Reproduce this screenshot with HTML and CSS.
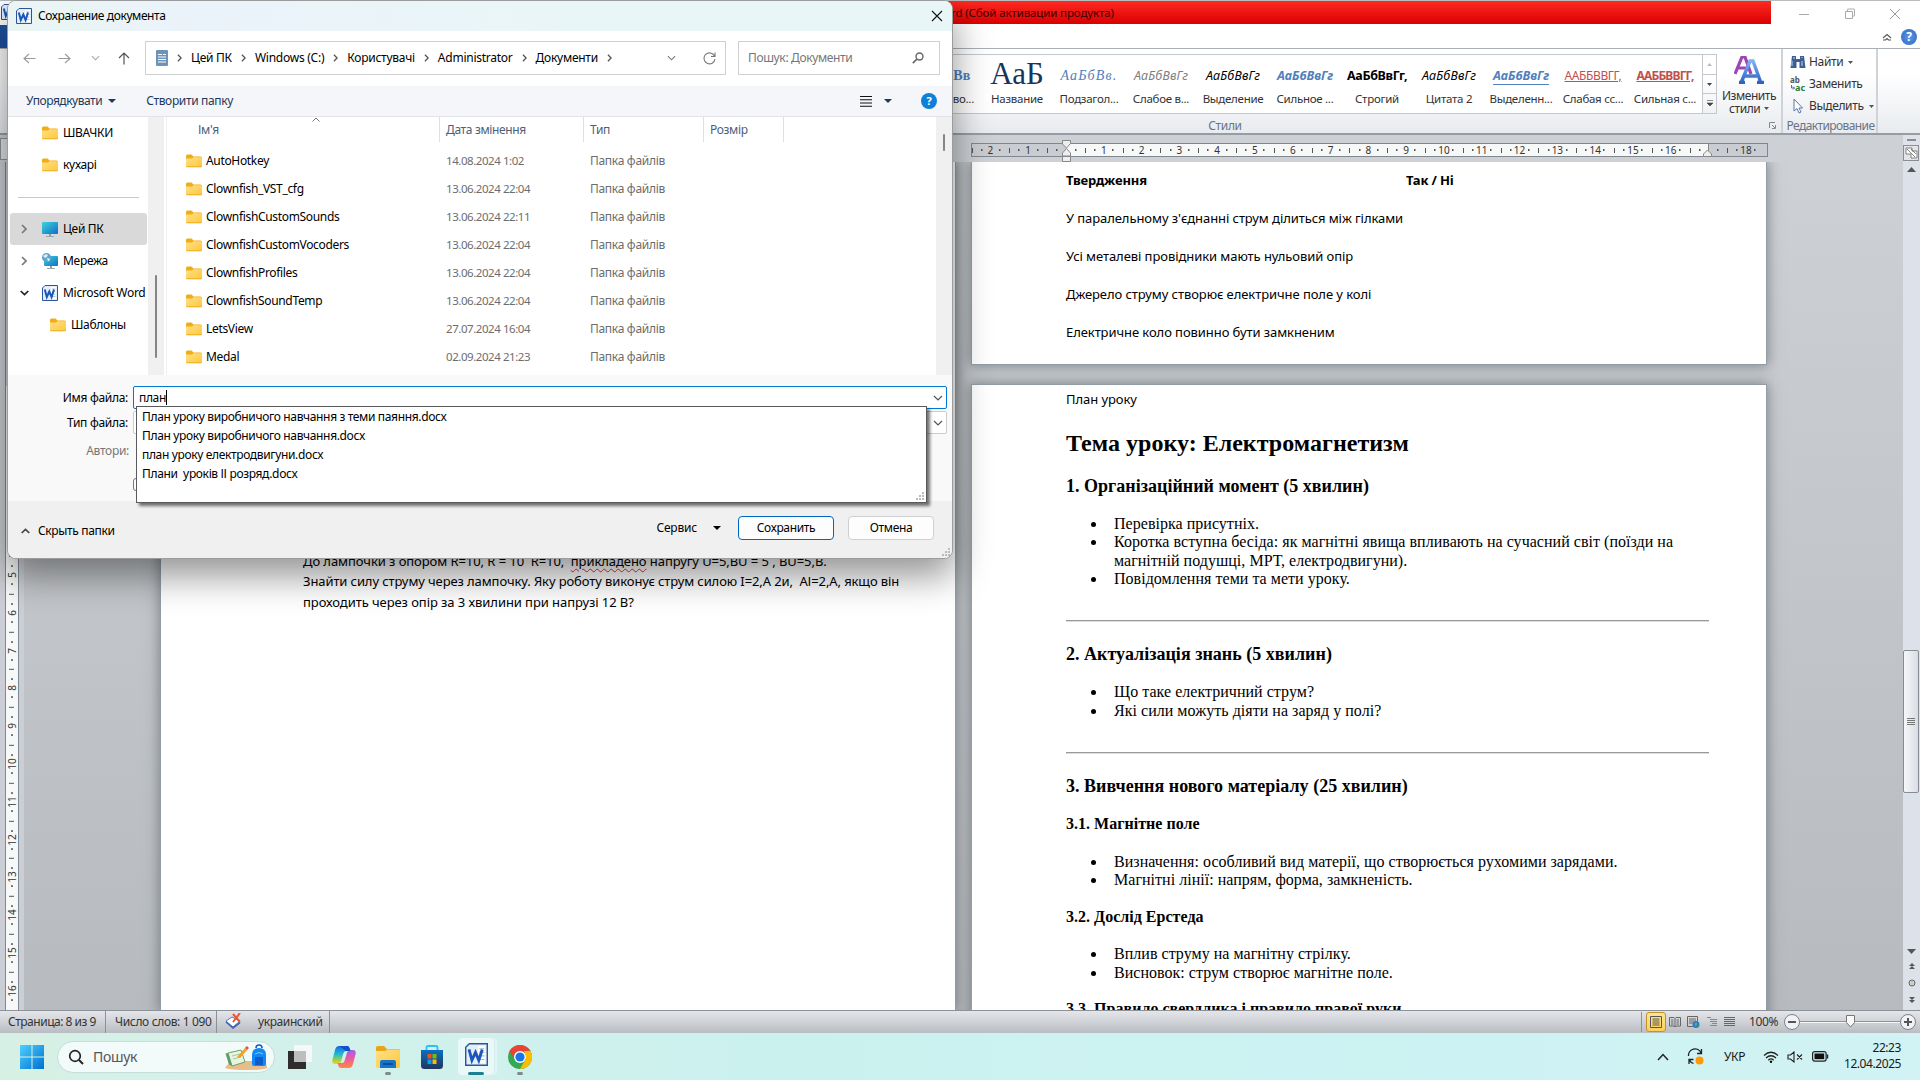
FILE: index.html
```html
<!DOCTYPE html>
<html lang="uk">
<head>
<meta charset="utf-8">
<title>Сохранение документа</title>
<link rel="stylesheet" href="styles.css">
</head>
<body>
<svg class="defs" width="0" height="0">
  <defs>
    <linearGradient id="gFolder" x1="0" y1="0" x2="1" y2="1"><stop offset="0" stop-color="#ffe08a"/><stop offset="1" stop-color="#fdc738"/></linearGradient>
    <linearGradient id="gScreen" x1="0" y1="0" x2="1" y2="1"><stop offset="0" stop-color="#3ed3dc"/><stop offset="1" stop-color="#0f6fc4"/></linearGradient>
    <linearGradient id="gWin" x1="0" y1="0" x2="1" y2="1"><stop offset="0" stop-color="#4fd0ff"/><stop offset="1" stop-color="#0070d0"/></linearGradient>
    <linearGradient id="gCo1" x1="0" y1="0" x2="0" y2="1"><stop offset="0" stop-color="#1b66e0"/><stop offset=".45" stop-color="#22b8d8"/><stop offset=".75" stop-color="#8fd14a"/><stop offset="1" stop-color="#f7d02c"/></linearGradient>
    <linearGradient id="gCo2" x1="0" y1="0" x2="0" y2="1"><stop offset="0" stop-color="#a35cf0"/><stop offset=".5" stop-color="#ef5a9a"/><stop offset="1" stop-color="#ff8a3c"/></linearGradient>
    <linearGradient id="gStore" x1="0" y1="0" x2="0" y2="1"><stop offset="0" stop-color="#0b6fc0"/><stop offset="1" stop-color="#22355f"/></linearGradient>
    <linearGradient id="gA" x1="0" y1="0" x2="0" y2="1"><stop offset="0" stop-color="#7fb2f0"/><stop offset="1" stop-color="#2a62c0"/></linearGradient>
  </defs>
  <symbol id="folder" viewBox="0 0 16 14"><path d="M0 2a1.5 1.5 0 0 1 1.500-1.500H5.500L7.500 2.500H14.500A1.500 1.500 0 0 1 16 4V6H0Z" fill="#f3ab16"/><path d="M0 4.500H6L7.500 3.200H14.800A1.200 1.200 0 0 1 16 4.400V12a1.300 1.300 0 0 1-1.300 1.300H1.300A1.300 1.300 0 0 1 0 12Z" fill="url(#gFolder)"/><path d="M.3 12.700H15.700" stroke="#eda91c" stroke-width=".8"/></symbol>
  <symbol id="word" viewBox="0 0 16 16"><path d="M3 .5H15.500V15.500H.5V3Z" fill="#e4eefb" stroke="#2b579a"/><path d="M9 2H14V14H9Z" fill="#fff"/><path d="M10 4h3.500M10 6.500h3.500M10 9h3.500M10 11.500h3.500" stroke="#9ab8e0" stroke-width=".8"/><path d="M2.800 4.500L4.800 12L7.300 6.500L9.600 12L12 4.500" fill="none" stroke="#1c57b8" stroke-width="2"/></symbol>
  <symbol id="pc" viewBox="0 0 16 15"><rect x="0" y="0" width="16" height="12" rx="1" fill="url(#gScreen)"/><path d="M7 12h2v2h-2z" fill="#8e9aa6"/><path d="M4 14h8v1h-8z" fill="#9aa6b2"/></symbol>
  <symbol id="net" viewBox="0 0 16 16"><rect x="2" y="3" width="14" height="10" rx="1" fill="url(#gScreen)"/><path d="M8 13h2v2h-2z" fill="#8e9aa6"/><path d="M5 15h8v1h-8z" fill="#9aa6b2"/><circle cx="4.500" cy="4.500" r="4.500" fill="#5aa6cf"/><path d="M1 3q3-3 5-1q-1 3-3 3zM5 5q3 0 3 2l-2 1.500z" fill="#d6f0f7"/></symbol>
  <symbol id="chevR" viewBox="0 0 6 10"><path d="M1 1L5 5L1 9" fill="none" stroke="currentColor" stroke-width="1.600"/></symbol>
  <symbol id="chevD" viewBox="0 0 10 6"><path d="M1 1L5 5L9 1" fill="none" stroke="currentColor" stroke-width="1.200"/></symbol>
  <symbol id="tri" viewBox="0 0 8 4"><path d="M0 0H8L4 4Z" fill="currentColor"/></symbol>
</svg>

<div class="screen">
  <section class="word">
    <header class="caption">
      <svg class="caption-icon" width="16" height="16"><use href="#word"/></svg>
      <div class="caption-red"><span>rd (Сбой активации продукта)</span></div>
      <div class="caption-btns">
        <svg width="12" height="12"><path d="M1 6.500h10" stroke="#aaa"/></svg>
        <svg width="12" height="12"><path d="M1.500 3.500h7v7h-7zM3.500 3.500v-2q0-.5.500-.5h6q.5 0 .5.500v6q0 .5-.5.500h-1.500" fill="none" stroke="#aaa"/></svg>
        <svg width="12" height="12"><path d="M1 1L11 11M11 1L1 11" stroke="#999"/></svg>
      </div>
    </header>
    <div class="tabs">
      <div class="file-tab"></div>
      <div class="tabs-end">
        <svg width="10" height="8"><path d="M1 5L5 1.500L9 5M1 7h2.500L5 5.500L6.500 7H9" fill="none" stroke="#555" stroke-width="1.100"/></svg>
        <span class="help-big">?</span>
      </div>
    </div>
    <div class="ribbon">
      <div class="styles-group">
        <div class="styles-main">
          <div class="gallery">
            <div class="style"><b class="pv heading">АаБбВв</b><span>Заголово...</span></div>
            <div class="style"><b class="pv title">АаБ</b><span>Название</span></div>
            <div class="style"><b class="pv subtitle">АаБбВв.</b><span>Подзагол...</span></div>
            <div class="style"><b class="pv it grey">АаБбВвГг</b><span>Слабое в...</span></div>
            <div class="style"><b class="pv it">АаБбВвГг</b><span>Выделение</span></div>
            <div class="style"><b class="pv it bold blue">АаБбВвГг</b><span>Сильное ...</span></div>
            <div class="style"><b class="pv bold">АаБбВвГг,</b><span>Строгий</span></div>
            <div class="style"><b class="pv it">АаБбВвГг</b><span>Цитата 2</span></div>
            <div class="style"><b class="pv it bold blue under">АаБбВвГг</b><span>Выделенн...</span></div>
            <div class="style"><b class="pv red caps">ААББВВГГ,</b><span>Слабая сс...</span></div>
            <div class="style"><b class="pv red caps bold">ААББВВГГ,</b><span>Сильная с...</span></div>
          </div>
          <div class="gallery-nav">
            <i class="off"><svg width="5" height="3"><path d="M0 3L2.500 0L5 3z" fill="#bbb"/></svg></i>
            <i><svg width="5" height="3"><path d="M0 0h5L2.500 3z" fill="#444"/></svg></i>
            <i><svg width="6" height="7"><path d="M0 .5h6M0 3h6L3 6z" fill="#444" stroke="#444" stroke-width=".6"/></svg></i>
          </div>
          <div class="change">
            <svg width="30" height="28"><path d="M1 18L8 1H11L17 18M4 12H14" fill="none" stroke="#a044b4" stroke-width="3.200"/><path d="M7 27L16 5H19L27 27M11 20H23M5 26.500h6M23 26.500h7" fill="none" stroke="url(#gA)" stroke-width="3.400"/></svg>
            <span>Изменить</span><span>стили <svg width="5" height="3"><path d="M0 0h5L2.500 3z" fill="#555"/></svg></span>
          </div>
        </div>
        <div class="group-name styles-name">Стили</div>
        <svg class="launcher" width="7" height="7"><path d="M.5 6V.5H6M3 3L6 6M6.500 3V6.500H3" fill="none" stroke="#888"/></svg>
      </div>
      <div class="edit-group">
        <div class="edit-rows">
          <div><svg width="16" height="14"><path d="M2 1h4v3h4V1h4l1.500 12H9.500V7h-3v6H.5z" fill="#3d5f94"/><path d="M2 6v5M12 6v5M4 2v2M12 2v1" stroke="#c5d7ee"/></svg><span>Найти</span><svg class="dd" width="5" height="3"><path d="M0 0h5L2.500 3z" fill="#555"/></svg></div>
          <div><svg width="16" height="16"><text x="0" y="7" class="ab">ab</text><text x="5" y="15" class="ac">ac</text><path d="M1.500 9v3h3M3 10.500L4.500 12L3 13.500" fill="none" stroke="#3b6ec8"/></svg><span>Заменить</span></div>
          <div><svg width="16" height="16"><path d="M4 1V13L7 10.500L9 15L11 14L9 10H12.500Z" fill="#fff" stroke="#5877a8"/></svg><span>Выделить</span><svg class="dd" width="5" height="3"><path d="M0 0h5L2.500 3z" fill="#555"/></svg></div>
        </div>
        <div class="group-name">Редактирование</div>
      </div>
      <div class="ribbon-rest"></div>
    </div>
    <div class="ruler-row">
      <div class="tab-kind"></div>
      <div class="ruler">
        <div class="r-off l"><i class="edge"></i><i>2</i><i>1</i><i class="half"></i></div>
        <div class="r-on"><i class="half"></i><i>1</i><i>2</i><i>3</i><i>4</i><i>5</i><i>6</i><i>7</i><i>8</i><i>9</i><i>10</i><i>11</i><i>12</i><i>13</i><i>14</i><i>15</i><i>16</i><i></i></div>
        <div class="r-off r"><i class="tail"></i><i>18</i></div>
        <svg class="marker-l" width="10" height="23"><path d="M.5.5h8v3L4.500 8L.5 4zM4.500 8.500L8.500 13v3h-8v-3zM.5 16.500h8v5h-8z" fill="#eee" stroke="#888"/></svg>
        <svg class="marker-r" width="10" height="8"><path d="M.5 7V5L4.500 1L8.500 5V7.500H.5" fill="#eee" stroke="#888"/></svg>
      </div>
      <div class="ruler-toggle">
        <b></b>
        <svg width="16" height="16"><rect x=".5" y=".5" width="15" height="15" fill="#e2e4ea" stroke="#8a8f96"/><path d="M3 3h6v3h5v7H8V9H3zM4 4l8 8M8 4l5 5" fill="#fff" stroke="#666" stroke-width=".8"/></svg>
      </div>
    </div>
    <div class="work">
      <div class="vruler">
        <div class="v-off"></div>
        <div class="v-on"><i class="half"></i><i>1</i><i>2</i><i>3</i><i>4</i><i>5</i><i>6</i><i>7</i><i>8</i><i>9</i><i>10</i><i>11</i><i>12</i><i>13</i><i>14</i><i>15</i><i>16</i></div>
      </div>
      <div class="canvas">
        <div class="page left">
          <p>До лампочки з опором R=10, R = 10&nbsp; R=10,&nbsp; <u>прикладено</u> напругу U=5,ВU = 5 , ВU=5,В.</p>
          <p class="q2">Знайти силу струму через лампочку. Яку роботу виконує струм силою I=2,А 2и,&nbsp; АІ=2,А, якщо він</p>
          <p>проходить через опір за 3 хвилини при напрузі 12 В?</p>
        </div>
        <div class="col">
          <div class="page top">
            <p class="th"><b>Твердження</b><b>Так / Ні</b></p>
            <p>У паралельному з'єднанні струм ділиться між гілками</p>
            <p>Усі металеві провідники мають нульовий опір</p>
            <p>Джерело струму створює електричне поле у колі</p>
            <p>Електричне коло повинно бути замкненим</p>
          </div>
          <div class="page lesson">
            <p>План уроку</p>
            <h1>Тема уроку: Електромагнетизм</h1>
            <h2>1. Організаційний момент (5 хвилин)</h2>
            <ul><li>Перевірка присутніх.</li><li>Коротка вступна бесіда: як магнітні явища впливають на сучасний світ (поїзди на<br>магнітній подушці, МРТ, електродвигуни).</li><li>Повідомлення теми та мети уроку.</li></ul>
            <hr>
            <h2>2. Актуалізація знань (5 хвилин)</h2>
            <ul><li>Що таке електричний струм?</li><li>Які сили можуть діяти на заряд у полі?</li></ul>
            <hr>
            <h2>3. Вивчення нового матеріалу (25 хвилин)</h2>
            <h3>3.1. Магнітне поле</h3>
            <ul><li>Визначення: особливий вид матерії, що створюється рухомими зарядами.</li><li>Магнітні лінії: напрям, форма, замкненість.</li></ul>
            <h3>3.2. Дослід Ерстеда</h3>
            <ul><li>Вплив струму на магнітну стрілку.</li><li>Висновок: струм створює магнітне поле.</li></ul>
            <h3>3.3. Правило свердлика і правило правої руки</h3>
          </div>
        </div>
      </div>
      <div class="vscroll">
        <svg width="9" height="5"><path d="M0 5L4.500 0L9 5z" fill="#555"/></svg>
        <div class="track"><div class="thumb"><b></b><b></b><b></b><b></b></div></div>
        <svg width="9" height="5"><path d="M0 0L4.500 5L9 0z" fill="#555"/></svg>
        <div class="browse">
          <svg width="8" height="8"><path d="M1 4L4 1L7 4zM1 7L4 4L7 7z" fill="#555"/></svg>
          <svg width="8" height="8"><circle cx="4" cy="4" r="3" fill="#ccc" stroke="#666"/></svg>
          <svg width="8" height="8"><path d="M1 1L4 4L7 1zM1 4L4 7L7 4z" fill="#555"/></svg>
        </div>
      </div>
    </div>
    <footer class="status">
      <span class="s1">Страница: 8 из 9</span><span class="s2">Число слов: 1 090</span>
      <span class="s3"><svg width="17" height="16"><path d="M1 8L7 4L15 8L8 14Z" fill="#fff" stroke="#5a78b8"/><path d="M1 9L8 15L15 9.500" fill="none" stroke="#3f66b5" stroke-width="1.600"/><path d="M8 1L15 9M15 0L8 9" stroke="#f0562e" stroke-width="2"/></svg></span>
      <span class="s4">украинский</span>
      <div class="views">
        <i class="on"><svg width="12" height="12"><path d="M.5.5h11v11H.5zM2.500 3h7M2.500 5h7M2.500 7h7M2.500 9h7" fill="none" stroke="#555"/></svg></i>
        <i><svg width="12" height="12"><path d="M.5 1.500H5L6 2.500L7 1.500H11.500V10H7L6 11L5 10H.5zM6 2.500V11M2 4h2.500M2 6h2.500M2 8h2.500M7.500 4H10M7.500 6H10M7.500 8H10" fill="none" stroke="#666"/></svg></i>
        <i><svg width="13" height="12"><path d="M.5.5h10v10H.5zM2 3h7M2 5h7M2 7h5" fill="none" stroke="#666"/><circle cx="9" cy="8.500" r="3.500" fill="#2f7fc0"/><path d="M8 7q2-1 2 1t-2 2z" fill="#5cb85c"/></svg></i>
        <i><svg width="10" height="12"><path d="M0 1.500h4M3 3.500h7M3 5.500h7M5 7.500h5M3 9.500h7" stroke="#888"/></svg></i>
        <i><svg width="11" height="12"><path d="M0 1.500h11M0 3.500h11M0 5.500h11M0 7.500h11M0 9.500h11" stroke="#666"/></svg></i>
      </div>
      <span class="pct">100%</span>
      <svg class="zoom" width="134" height="20"><path d="M17 9.500H117" stroke="#8d949e"/><path d="M17 10.500H117" stroke="#f4f5f7"/><circle cx="9" cy="10" r="7.500" fill="#f1f2f5" stroke="#7d838c"/><path d="M5 10h8" stroke="#555" stroke-width="2"/><circle cx="125" cy="10" r="7.500" fill="#f1f2f5" stroke="#7d838c"/><path d="M121 10h8M125 6v8" stroke="#555" stroke-width="2"/><path d="M63.500 3.500h8v7L67.500 15L63.500 10.500z" fill="#fafafa" stroke="#777"/></svg>
    </footer>
  </section>

  <section class="taskbar">
    <svg class="start" width="24" height="24"><path d="M0 0h11.500v11.500H0zM12.500 0H24v11.500H12.500zM0 12.500h11.500V24H0zM12.500 12.500H24V24H12.500z" fill="url(#gWin)"/></svg>
    <div class="search">
      <svg width="16" height="16"><circle cx="7" cy="7" r="5.300" fill="none" stroke="#222" stroke-width="1.700"/><path d="M11 11L15 15" stroke="#222" stroke-width="1.900"/></svg>
      <span>Пошук</span>
      <svg class="pic" width="46" height="26"><path d="M1 24q2-6 14-7h20q9 2 8 7q-4 2-20 2t-22-2z" fill="#e7bd8a"/><path d="M4 9l13-3l4 12l-13 4z" fill="#e8f3e0" stroke="#6aa562"/><path d="M4 9l4 13l-3-1.500l-3.500-11z" fill="#5d9b6c"/><path d="M8 12l8-2M9 15l8-2" stroke="#a9c8a0"/><path d="M13 13L22 3L24 5L16 14z" fill="#f5a21b"/><path d="M21 4l2-2l2 2l-1.500 1.500z" fill="#e0524c"/><path d="M28 20V11q0-7 7-7t7 7v9q0 2-2 2H30q-2 0-2-2z" fill="#1488f2"/><path d="M31 13h8v8h-8z" fill="#0b5ccc"/><path d="M32 4q0-3 3-3t3 3" fill="none" stroke="#0b5ccc" stroke-width="1.500"/><path d="M31 10q4-3 8 0" stroke="#6fd0ff" fill="none"/></svg>
    </div>
    <svg class="tv" width="24" height="24"><rect x="6" y="0" width="18" height="17" rx="1" fill="#f6f8f8"/><path d="M0 6h6v11h12v7H0z" fill="#2d2d2d"/><rect x="6" y="6" width="12" height="11" fill="#bdbfbf"/></svg>
    <svg width="24" height="24"><path d="M7 1H15q2 0 2.500 2L18.500 6H14Q12 6 11.300 8.500L9 16.500Q8.300 19 6 19H3Q-.5 19 .5 14.500L3 5Q4 1 7 1z" fill="url(#gCo1)"/><path d="M17 23H9q-2 0-2.500-2L5.500 18H10Q12 18 12.700 15.500L15 7.500Q15.700 5 18 5H21Q24.500 5 23.500 9.500L21 19Q20 23 17 23z" fill="url(#gCo2)"/><path d="M7 1H15q2 0 2.500 2L18.500 6H14z" fill="#1450c8"/></svg>
    <div class="app"><svg width="24" height="24"><path d="M0 2.500Q0 1 1.500 1H8l3 3H22.500q1.500 0 1.500 1.500V10H0z" fill="#e9a516"/><path d="M0 6h9l2-1.500H22.500Q24 4.500 24 6v15.500q0 1.500-1.500 1.500h-21Q0 23 0 21.500z" fill="url(#gFolder)"/><path d="M4 23V17q0-2 2-2H18q2 0 2 2v6z" fill="#1673c8"/><path d="M7 19h10" stroke="#0b4f9a" stroke-width="2"/></svg><b></b></div>
    <svg width="24" height="24"><path d="M6.500 6V2.500q0-1.500 1.500-1.500h8q1.500 0 1.500 1.500V6" fill="none" stroke="#2ec0f2" stroke-width="1.800"/><path d="M1 5H23V20.500Q23 24 19.500 24H4.500Q1 24 1 20.500z" fill="url(#gStore)"/><path d="M7.500 9h4v4.500h-4z" fill="#f25022"/><path d="M12.500 9h4v4.500h-4z" fill="#7fba00"/><path d="M7.500 14.500h4V19h-4z" fill="#00a4ef"/><path d="M12.500 14.500h4V19h-4z" fill="#ffb900"/></svg>
    <div class="app active"><svg width="23" height="23"><use href="#word"/></svg><b></b></div>
    <div class="app chrome"><svg width="24" height="24" viewBox="0 0 24 24"><circle cx="12" cy="12" r="12" fill="#34a853"/><path d="M1.600 6A12 12 0 0 1 22.400 6H12A6 6 0 0 0 6.800 15z" fill="#ea4335"/><path d="M22.400 6A12 12 0 0 1 12 24L17.200 15A6 6 0 0 0 17.200 9L16 6z" fill="#fbbc04"/><circle cx="12" cy="12" r="6" fill="#fff"/><circle cx="12" cy="12" r="4.600" fill="#1a73e8"/></svg><b></b></div>
    <div class="tray">
      <svg class="t1" width="12" height="8"><path d="M1 7L6 1.500L11 7" fill="none" stroke="#222" stroke-width="1.500"/></svg>
      <svg class="t2" width="18" height="18"><path d="M1.500 8A6.500 6.500 0 0 1 14 5M14.500 1v4.500H10M6.500 15.500Q3.500 14.500 2.500 12M2 16V11.500H6.500" fill="none" stroke="#222" stroke-width="1.300"/><circle cx="12.500" cy="12.500" r="4" fill="#fb9a09"/></svg>
      <span class="lang">УКР</span>
      <svg class="t3" width="16" height="12"><path d="M1 4.500Q8-2 15 4.500M3 7Q8 2.500 13 7M5.300 9.200Q8 6.700 10.700 9.200" fill="none" stroke="#222" stroke-width="1.200"/><circle cx="8" cy="10.700" r="1.200"/></svg>
      <svg class="t4" width="16" height="12"><path d="M1 4H3.500L7 1V11L3.500 8H1zM10 3.500L15 8.500M15 3.500L10 8.500" fill="none" stroke="#222" stroke-width="1.100"/></svg>
      <svg class="t5" width="17" height="11"><rect x=".6" y=".6" width="13.500" height="9.500" rx="2" fill="none" stroke="#222" stroke-width="1.200"/><rect x="2.500" y="2.500" width="9.700" height="5.700" fill="#111"/><path d="M15.500 3.500v4" stroke="#222" stroke-width="1.400"/></svg>
      <div class="clock"><span>22:23</span><span>12.04.2025</span></div>
    </div>
  </section>

  <section class="dialog">
    <header class="d-title"><svg width="16" height="16"><use href="#word"/></svg><span>Сохранение документа</span><svg class="x" width="12" height="12"><path d="M1 1L11 11M11 1L1 11" stroke="#111" stroke-width="1.100"/></svg></header>
    <div class="d-nav">
      <svg class="n1" width="13" height="11"><path d="M12.500 5.500H1M6 1L1 5.500L6 10" fill="none" stroke="#9a9a9a" stroke-width="1.100"/></svg>
      <svg class="n2" width="13" height="11"><path d="M.5 5.500H12M7 1L12 5.500L7 10" fill="none" stroke="#9a9a9a" stroke-width="1.100"/></svg>
      <svg class="n3" width="9" height="6"><use href="#chevD" color="#a5a5a5"/></svg>
      <svg class="n4" width="12" height="13"><path d="M6 12.500V1M1 6L6 1L11 6" fill="none" stroke="#555" stroke-width="1.200"/></svg>
      <div class="address">
        <svg class="docicon" width="12" height="16"><rect width="12" height="16" rx="1" fill="#6d93b8"/><path d="M2 4.500h4M2 7h8M2 9.500h8M7 4.500h3M2 12h8" stroke="#fff"/></svg>
        <svg class="sep" width="5" height="8"><use href="#chevR"/></svg><span>Цей ПК</span>
        <svg class="sep" width="5" height="8"><use href="#chevR"/></svg><span>Windows (C:)</span>
        <svg class="sep" width="5" height="8"><use href="#chevR"/></svg><span>Користувачі</span>
        <svg class="sep" width="5" height="8"><use href="#chevR"/></svg><span>Administrator</span>
        <svg class="sep" width="5" height="8"><use href="#chevR"/></svg><span>Документи</span>
        <svg class="sep" width="5" height="8"><use href="#chevR"/></svg>
        <svg class="drop" width="9" height="6"><use href="#chevD" color="#777"/></svg>
        <svg class="reload" width="13" height="13"><path d="M11.500 4A5.500 5.500 0 1 0 12 7M12 .5V4.500H8" fill="none" stroke="#777" stroke-width="1.100"/></svg>
      </div>
      <div class="find"><span>Пошук: Документи</span><svg width="12" height="12"><circle cx="7.500" cy="4.500" r="3.500" fill="none" stroke="#666" stroke-width="1.400"/><path d="M5 7L.8 11.200" stroke="#666" stroke-width="1.700"/></svg></div>
    </div>
    <div class="d-tools">
      <span class="org">Упорядкувати</span><svg width="8" height="4"><use href="#tri"/></svg><span class="new">Створити папку</span>
      <svg class="list-ic" width="12" height="11"><path d="M0 .5h12M0 3.700h12M0 7h12M0 10.300h12" stroke="#111" stroke-width="1.100"/></svg>
      <svg class="list-dd" width="8" height="4"><use href="#tri"/></svg>
      <span class="help">?</span>
    </div>
    <div class="d-body">
      <nav class="tree">
        <div class="row sub"><svg width="16" height="14"><use href="#folder"/></svg><span>ШВАЧКИ</span></div>
        <div class="row sub"><svg width="16" height="14"><use href="#folder"/></svg><span>кухарі</span></div>
        <div class="rule"></div>
        <div class="row sel"><svg class="ch" width="6" height="10"><use href="#chevR"/></svg><svg width="16" height="15"><use href="#pc"/></svg><span>Цей ПК</span></div>
        <div class="row"><svg class="ch" width="6" height="10"><use href="#chevR"/></svg><svg width="16" height="16"><use href="#net"/></svg><span>Мережа</span></div>
        <div class="row"><svg class="ch open" width="9" height="6"><path d="M.7 1L4.500 4.600L8.300 1" fill="none" stroke="#222" stroke-width="1.700"/></svg><svg width="16" height="16"><use href="#word"/></svg><span>Microsoft Word</span></div>
        <div class="row deep"><svg width="16" height="14"><use href="#folder"/></svg><span>Шаблоны</span></div>
      </nav>
      <div class="bar"><b class="tree-thumb"></b></div>
      <div class="files">
        <div class="fh"><span>Ім'я</span><span>Дата змінення</span><span>Тип</span><span>Розмір</span><svg width="8" height="5"><path d="M.5 4.500L4 1L7.500 4.500" fill="none" stroke="#777"/></svg></div>
        <div class="fr"><svg width="16" height="14"><use href="#folder"/></svg><span>AutoHotkey</span><em>14.08.2024 1:02</em><i>Папка файлів</i></div>
        <div class="fr"><svg width="16" height="14"><use href="#folder"/></svg><span>Clownfish_VST_cfg</span><em>13.06.2024 22:04</em><i>Папка файлів</i></div>
        <div class="fr"><svg width="16" height="14"><use href="#folder"/></svg><span>ClownfishCustomSounds</span><em>13.06.2024 22:11</em><i>Папка файлів</i></div>
        <div class="fr"><svg width="16" height="14"><use href="#folder"/></svg><span>ClownfishCustomVocoders</span><em>13.06.2024 22:04</em><i>Папка файлів</i></div>
        <div class="fr"><svg width="16" height="14"><use href="#folder"/></svg><span>ClownfishProfiles</span><em>13.06.2024 22:04</em><i>Папка файлів</i></div>
        <div class="fr"><svg width="16" height="14"><use href="#folder"/></svg><span>ClownfishSoundTemp</span><em>13.06.2024 22:04</em><i>Папка файлів</i></div>
        <div class="fr"><svg width="16" height="14"><use href="#folder"/></svg><span>LetsView</span><em>27.07.2024 16:04</em><i>Папка файлів</i></div>
        <div class="fr"><svg width="16" height="14"><use href="#folder"/></svg><span>Medal</span><em>02.09.2024 21:23</em><i>Папка файлів</i></div>
      </div>
      <div class="bar"><b class="file-thumb"></b></div>
    </div>
    <div class="d-form">
      <div class="line"><label>Имя файла:</label><div class="combo focus"><span>план</span><svg width="10" height="6"><use href="#chevD"/></svg></div></div>
      <div class="line"><label>Тип файла:</label><div class="combo"><span></span><svg width="10" height="6"><use href="#chevD"/></svg></div></div>
      <div class="line authors"><label>Автори:</label></div>
      <div class="check"></div>
      <div class="suggest">
        <span>План уроку виробничого навчання з теми паяння.docx</span>
        <span>План уроку виробничого навчання.docx</span>
        <span>план уроку електродвигуни.docx</span>
        <span>Плани&nbsp; уроків ІІ розряд.docx</span>
        <svg class="grip" width="8" height="8"><path d="M6 0h2v2H6zM3 3h2v2H3zM6 3h2v2H6zM0 6h2v2H0zM3 6h2v2H3zM6 6h2v2H6z" fill="#bbb"/></svg>
      </div>
    </div>
    <footer class="d-foot">
      <svg width="9" height="6"><path d="M.7 5L4.500 1.400L8.300 5" fill="none" stroke="#444" stroke-width="1.700"/></svg>
      <span class="hide">Скрыть папки</span>
      <span class="tools">Сервис</span><svg class="tdd" width="8" height="4"><use href="#tri"/></svg>
      <button class="save">Сохранить</button><button>Отмена</button>
      <svg class="grip" width="8" height="8"><path d="M6 0h2v2H6zM3 3h2v2H3zM6 3h2v2H6zM0 6h2v2H0zM3 6h2v2H3zM6 6h2v2H6z" fill="#bbb"/></svg>
    </footer>
  </section>
</div>
</body>
</html>
```
FILE: styles.css
```css
* { box-sizing: border-box; }
body { margin: 0; font: 12px/16px "Noto Sans", "Open Sans", sans-serif; letter-spacing: -0.35px; color: #000; }
i, em { font-style: normal; }
svg { display: block; flex: none; }
.defs { position: absolute; }
.screen { position: relative; width: 1920px; height: 1080px; overflow: hidden; display: flex; flex-direction: column; }

/* Word window */
.word { height: 1033px; display: flex; flex-direction: column; background: #fff; }
.caption { height: 25px; flex: none; display: flex; align-items: flex-start; border-top: 1px solid #b9bcbe; }
.caption-icon { margin: 3px 0 0 1px; }
.caption-red { width: 1754px; height: 23px; background: linear-gradient(#ff2a22, #d90000); display: flex; align-items: center; padding-left: 934px; }
.caption-red span { color: #3c0000; font-size: 11.500px; letter-spacing: -0.12px; }
.caption-btns { flex: 1; display: flex; justify-content: space-between; padding: 7px 19px 0 27px; }
.tabs { height: 24px; flex: none; display: flex; justify-content: space-between; align-items: center; border-bottom: 1px solid #a9afb5; }
.file-tab { width: 60px; height: 23px; background: linear-gradient(90deg, #1d4f9e, #3f80d8); }
.tabs-end { display: flex; align-items: center; gap: 9px; padding-right: 3px; }
.help-big { width: 16px; height: 16px; border-radius: 50%; background: radial-gradient(#5c97e6, #2e66bd); color: #fff; font-weight: 700; text-align: center; letter-spacing: 0; }

.ribbon { height: 86px; flex: none; display: flex; background: linear-gradient(#fff 30%, #e8ebef); border-bottom: 2px solid #989da4; }
.styles-group { width: 1783px; border-right: 2px solid #cfd3d8; display: flex; flex-direction: column; padding-top: 5px; position: relative; }
.styles-main { display: flex; justify-content: flex-end; height: 60px; }
.gallery { display: flex; justify-content: flex-end; border: solid #c4c8cd; border-width: 1px 0; background: #fff; width: 900px; padding-right: 1px; }
.style { width: 72px; display: flex; flex-direction: column; align-items: center; flex: none; padding-top: 7px; }
.style span { font-size: 11.500px; letter-spacing: -0.27px; color: #333; line-height: 16px; margin-top: 4px; }
.pv { width: 60px; height: 25px; white-space: nowrap; font: 400 12.500px/28px "Noto Sans", sans-serif; letter-spacing: 0.15px; text-align: center; }
.pv.heading { font: 700 14px/28px "Liberation Serif", serif; color: #4f81bd; }
.pv.title { font: 400 31px/22px "Liberation Serif", serif; color: #17365d; letter-spacing: 0; overflow: hidden; padding-top: 1px; }
.pv.subtitle { font: italic 400 14px/28px "Liberation Serif", serif; color: #4f81bd; letter-spacing: 1.200px; }
.pv.it { font-style: italic; }
.pv.bold { font-weight: 700; letter-spacing: -0.35px; }
.pv.it.bold { letter-spacing: 0; }
.pv.grey { color: #808080; }
.pv.blue { color: #4f81bd; }
.pv.red { color: #c0504d; text-decoration: underline; }
.pv.caps { font-size: 12px; letter-spacing: -0.4px; }
.pv.caps.bold { letter-spacing: -0.8px; }
.pv.under { text-decoration: underline; text-underline-offset: 4px; }
.gallery-nav { width: 15px; border: 1px solid #c4c8cd; display: flex; flex-direction: column; }
.gallery-nav i { flex: 1; display: flex; align-items: center; justify-content: center; border-bottom: 1px solid #c4c8cd; }
.gallery-nav i:last-child { border: 0; }
.change { width: 64px; display: flex; flex-direction: column; align-items: center; padding-top: 2px; color: #333; line-height: 13px; letter-spacing: -0.45px; }
.change svg { margin-bottom: 5px; }
.change span svg { display: inline-block; margin: 0 0 3px 1px; }
.group-name { color: #6a7485; text-align: center; }
.styles-name { width: 60px; margin: 4px 0 0 1195px; }
.launcher { position: absolute; right: 5px; bottom: 4px; }
.edit-group { width: 95px; border-right: 2px solid #cfd3d8; padding-left: 2px; }
.edit-rows { height: 69px; padding-top: 2px; }
.edit-rows > div { height: 22px; display: flex; align-items: center; padding-left: 5px; color: #333; }
.edit-rows span { margin-left: 3px; }
.dd { margin-left: 5px; }
.ab { font: 700 8px "Noto Sans", sans-serif; fill: #555; letter-spacing: 0; }
.ac { font: 700 9px "Noto Sans", sans-serif; fill: #2a7a38; letter-spacing: 0; }
.edit-group .group-name { letter-spacing: -0.6px; }

.ruler-row { height: 27px; flex: none; display: flex; background: #cdd0d4; }
.tab-kind { width: 22px; height: 22px; margin: 3px 949px 0 0; border: 1px solid #8b929a; background: #dfe1e5; }
.ruler { width: 797px; height: 14px; margin-top: 8px; border: 1px solid #82878e; display: flex; position: relative; }
.ruler > div { display: flex; overflow: hidden; }
.r-off { background: #c9ccd1; }
.r-on { width: 642px; background: #f7f8f8; }
.r-off.l { width: 94px; justify-content: flex-end; }
.r-off.r { flex: 1; border-left: 1px solid #82878e; }
.ruler i, .v-on i { width: 37.800px; flex: none; text-align: center; font: 10px/12px "Noto Sans", sans-serif; letter-spacing: 0; color: #333;
  background: linear-gradient(#555, #555) 0 50%/1px 5px no-repeat, linear-gradient(#555, #555) 25% 50%/1.500px 2px no-repeat, linear-gradient(#555, #555) 75% 50%/1.500px 2px no-repeat; }
.ruler i.half { width: 18.900px; background: linear-gradient(#555, #555) 50% 50%/1.500px 2px no-repeat; }
.ruler .l i.half { background: linear-gradient(#555, #555) 0 50%/1px 5px no-repeat, linear-gradient(#555, #555) 50% 50%/1.500px 2px no-repeat; }
.ruler i.edge { width: 0; }
.ruler i.tail { width: 18px; background: linear-gradient(#555, #555) 50% 50%/1.500px 2px no-repeat; }
.marker-l { position: absolute; left: 90px; top: -4px; }
.marker-r { position: absolute; left: 731px; top: 5px; }
.ruler-toggle { width: 17px; margin-left: auto; background: #dfe2e9; padding-top: 4px; }
.ruler-toggle b { display: block; width: 9px; height: 2px; margin: 0 0 4px 4px; background: #888d94; }

.work { height: 849px; flex: none; display: flex; background: linear-gradient(#cdd0d4, #b7babe); border-bottom: 1px solid #8b929a; overflow: hidden; }
.vruler { width: 24px; flex: none; padding-left: 5px; background: #cbced4; display: flex; flex-direction: column; }
.vruler > div { width: 14px; border: solid #7f8790; border-width: 0 1px; }
.v-off { height: 224px; background: #c9ccd1; }
.v-on { flex: 1; background: #f7f8f8; overflow: hidden; display: flex; flex-direction: column; }
.v-on i { width: 12px; height: 37.800px; writing-mode: vertical-rl; transform: rotate(180deg);
  background: linear-gradient(#555, #555) 50% 100%/5px 1px no-repeat, linear-gradient(#555, #555) 50% 25%/2px 1.500px no-repeat, linear-gradient(#555, #555) 50% 75%/2px 1.500px no-repeat; }
.v-on i.half { height: 18.900px; }
.canvas { flex: 1; display: flex; gap: 17px; padding-left: 137px; }
.page { width: 794px; background: #fff; box-shadow: 0 0 0 1px #929da5, 0 0 12px 2px rgba(70, 78, 84, 0.55); font-size: 13px; letter-spacing: -0.07px; }
.page p { margin: 0; white-space: nowrap; }
.page.left { padding: 389px 0 0 142px; line-height: 20.300px; }
.page.left u { text-decoration: underline wavy #e03030 1px; text-underline-offset: 2px; }
.q2 { letter-spacing: -0.1px; }
.col { display: flex; flex-direction: column; gap: 21px; }
.page.top { height: 202px; flex: none; padding: 0 0 0 94px; line-height: 36px; }
.page.top p { height: 38px; }
.page.top .th { display: flex; letter-spacing: -0.15px; }
.th b:first-child { width: 340px; }
.lesson { height: 900px; flex: none; padding: 5px 0 0 94px; }
.lesson p { line-height: 18px; height: 18px; }
.lesson h1, .lesson h2, .lesson h3, .lesson ul { font-family: "Liberation Serif", "Times New Roman", serif; letter-spacing: 0.02px; margin: 0; white-space: nowrap; }
.lesson h1 { font-size: 24px; line-height: 30px; margin-top: 20px; }
.lesson h2 { font-size: 18px; line-height: 22px; margin-top: 17px; }
.lesson h3 { font-size: 16px; line-height: 20px; margin-top: 17.200px; }
.lesson h2 + h3 { margin-top: 17px; }
.lesson ul { font-size: 16px; line-height: 18.400px; padding-left: 48px; margin-top: 17.900px; letter-spacing: 0.03px; list-style: none; }
.lesson h3 + ul { margin-top: 18.600px; }
.lesson li::before { content: ""; display: inline-block; width: 5px; height: 5px; border-radius: 50%; background: #000; margin: 0 18px 2px -23px; }
.lesson hr { width: 643px; height: 2px; border: 0; border-top: 1px solid #999; border-bottom: 1px solid #ddd; margin: 31.900px 0 21px; }
.lesson hr + h2 { margin-top: 0; }

.vscroll { width: 17px; flex: none; background: #dde1e9; display: flex; flex-direction: column; align-items: center; padding-top: 5px; }
.track { flex: 1; width: 17px; padding-top: 478px; }
.thumb { width: 16px; height: 143px; border: 1px solid #858c96; border-radius: 2px; background: linear-gradient(90deg, #f5f7fa, #d9dde3); display: flex; flex-direction: column; gap: 1px; align-items: center; justify-content: center; }
.thumb b { width: 8px; height: 1px; background: #777; }
.browse { height: 56px; display: flex; flex-direction: column; gap: 9px; align-items: center; padding-top: 8px; }

.status { height: 22px; flex: none; display: flex; align-items: center; background: linear-gradient(#e4e6ea, #b9bdc2); color: #333; }
.status > span { height: 22px; line-height: 21px; border-right: 1px solid #8c9198; white-space: nowrap; flex: none; }
.s1 { width: 106px; padding-left: 8px; letter-spacing: -0.48px; }
.s2 { width: 111px; padding-left: 9px; }
.status .s3 { width: 34px; padding: 2px 0 0 8px; border: 0; }
.s4 { width: 79px; padding-left: 7px; letter-spacing: -0.4px; }
.views { display: flex; margin-left: auto; border-left: 1px solid #8c9198; padding-left: 4px; }
.views i { width: 18.300px; height: 20px; display: flex; align-items: center; justify-content: center; }
.views i.on { width: 20px; background: linear-gradient(#ffe58f, #fbd05a); border: 1px solid #c2912b; border-radius: 3px; }
.status .pct { border: 0; width: 32px; margin-left: 10px; }
.zoom { margin: 0 3px 0 2px; }

/* taskbar */
.taskbar { height: 47px; display: flex; align-items: center; background: linear-gradient(90deg, #d7f0e6, #cbf1ef 40%, #cdf2f3 75%, #d2f2f4); padding-left: 20px; gap: 20px; }
.search { width: 218px; height: 32px; border-radius: 16px; background: #f2fafa; border: 1px solid #c3dedb; margin: 0 -7px 0 -7px; display: flex; align-items: center; padding: 0 4px 0 10px; }
.search span { font-size: 14px; margin-left: 9px; color: #555; letter-spacing: -0.3px; }
.search .pic { margin-left: auto; }
.app { position: relative; width: 24px; height: 47px; display: flex; align-items: center; justify-content: center; }
.app b { position: absolute; bottom: 5px; left: 9px; width: 6px; height: 3px; border-radius: 2px; background: #7d8b8b; }
.app.active { width: 38px; height: 39px; margin: 0 -7px 0 -7px; padding-bottom: 4px; border-radius: 5px; background: #e9f8f8; border: 1px solid #d8ecec; box-shadow: 3px 0 0 -1px #dff5f5; }
.app.active b { width: 16px; bottom: 0; left: 10px; background: #1c7f92; }
.tray { margin-left: auto; display: flex; align-items: center; padding-right: 19px; color: #1a1a1a; }
.t1 { margin-right: 1px; }
.t2 { margin-left: 17px; }
.lang { margin-left: 19px; width: 22px; }
.t3 { margin-left: 17px; }
.t4 { margin-left: 8px; }
.t5 { margin-left: 9px; }
.clock { width: 72px; display: flex; flex-direction: column; text-align: right; letter-spacing: -0.43px; padding-bottom: 1px; }

/* save dialog */
.dialog { position: absolute; left: 8px; top: 1px; width: 944px; height: 557px; border-radius: 8px; background: #fff; display: flex; flex-direction: column; box-shadow: 0 0 0 1px #9a9c9e, 0 16px 36px 2px rgba(0, 0, 0, 0.42); }
.d-title { height: 30px; flex: none; border-radius: 8px 8px 0 0; background: linear-gradient(90deg, #e9f5f3, #ebf3fa 20%, #e9f6f7 60%, #e9f6f7); display: flex; align-items: center; padding: 0 9px 0 8px; }
.d-title span { margin-left: 6px; letter-spacing: -0.4px; }
.d-title .x { margin-left: auto; }
.d-nav { height: 55px; flex: none; display: flex; align-items: center; padding: 0 0 1px 15px; }
.n2 { margin-left: 22px; } .n3 { margin-left: 20px; } .n4 { margin-left: 18px; }
.address { width: 581px; height: 34px; flex: none; border: 1px solid #d0d0d0; margin: 0 12px 0 15px; display: flex; align-items: center; padding-left: 10px; letter-spacing: -0.25px; white-space: nowrap; }
.sep { margin: 0 9px; color: #555; }
.drop { margin-left: 46px; }
.reload { margin-left: 27px; }
.find { width: 202px; height: 34px; flex: none; border: 1px solid #d0d0d0; display: flex; align-items: center; justify-content: space-between; padding: 0 15px 0 9px; color: #767676; }
.d-tools { height: 31px; flex: none; background: #f4f6f9; border-bottom: 1px solid #e2e4e7; display: flex; align-items: center; padding: 0 15px 0 18px; color: #1e395b; }
.org { margin-right: 6px; letter-spacing: -0.48px; }
.new { margin-left: 30px; }
.list-ic { margin-left: auto; }
.list-dd { margin: 0 29px 0 12px; }
.help { width: 16px; height: 16px; border-radius: 50%; background: #0f80d7; color: #fff; font-weight: 700; font-size: 11px; text-align: center; letter-spacing: 0; }
.d-body { height: 258px; flex: none; display: flex; }
.tree { width: 140px; display: flex; flex-direction: column; overflow: hidden; padding-left: 2px; }
.row { width: 137px; height: 32px; flex: none; display: flex; align-items: center; white-space: nowrap; padding-left: 11px; letter-spacing: -0.3px; }
.row .ch { color: #777; margin-right: 15px; }
.row .ch.open { margin: 0 13px 0 -1px; }
.row span { margin-left: 5px; }
.row.sub { padding-left: 32px; }
.row.deep { padding-left: 40px; }
.row.sel { background: #d9d9d9; border-radius: 3px; }
.rule { height: 1px; flex: none; margin: 16px 9px 15px 8px; background: #c9c9c9; }
.bar { width: 16px; flex: none; background: #f0f0f0; padding-left: 7px; }
.bar b { display: block; width: 2px; border-radius: 1px; background: #858585; }
.tree-thumb { height: 83px; margin-top: 158px; }
.file-thumb { height: 17px; margin-top: 17px; }
.files { flex: 1; margin-left: 2px; border-left: 1px solid #f0f0f0; }
.fh { height: 25px; display: flex; color: #4c607a; line-height: 26px; position: relative; margin-bottom: 5px; }
.fh span { border-right: 1px solid #e0e0e0; padding-left: 6px; }
.fh span:nth-child(1) { width: 273px; padding-left: 31px; }
.fh span:nth-child(2) { width: 144px; }
.fh span:nth-child(3) { width: 120px; }
.fh span:nth-child(4) { width: 80px; }
.fh svg { position: absolute; left: 145px; top: 0; }
.fr { height: 28px; display: flex; align-items: center; padding-left: 19px; }
.fr span { width: 244px; padding-left: 4px; letter-spacing: -0.33px; }
.fr em { width: 144px; font-size: 11.500px; letter-spacing: -0.44px; color: #6d6d6d; }
.fr i { color: #6d6d6d; letter-spacing: -0.3px; }
.d-form { height: 126px; flex: none; background: #f9f9f9; padding-top: 11px; position: relative; }
.line { display: flex; align-items: center; height: 23px; margin-bottom: 2px; }
.line label { width: 120px; text-align: right; margin-right: 5px; letter-spacing: -0.3px; }
.combo { width: 814px; height: 23px; background: #fff; border: 1px solid #ccc; border-radius: 2px; display: flex; align-items: center; justify-content: space-between; padding: 0 3px 0 5px; color: #555; }
.combo.focus { border-color: #0078d4; }
.combo span { color: #000; line-height: 15px; }
.combo.focus span { border-right: 1px solid #000; }
.authors { color: #777; padding-top: 6px; }
.authors label { width: 121px; }
.check { width: 13px; height: 13px; border: 1px solid #777; border-radius: 3px; background: #fff; margin: 19px 0 0 125px; }
.suggest { position: absolute; z-index: 2; left: 128px; top: 31px; width: 791px; height: 97px; background: #fff; border: 1px solid #5a5a5a; box-shadow: 3px 3px 3px rgba(0, 0, 0, 0.55); display: flex; flex-direction: column; padding: 0 0 0 5px; }
.suggest span { line-height: 19px; }
.grip { position: absolute; right: 2px; bottom: 2px; }
.d-foot { flex: 1; background: #f0f0f0; border-radius: 0 0 8px 8px; display: flex; align-items: center; padding: 0 18px 3px 13px; position: relative; }
.d-foot > svg:first-child { margin-top: 6px; }
.hide { margin: 6px 0 0 8px; }
.tools { margin-left: auto; letter-spacing: -0.2px; }
.tdd { margin: 0 17px 0 16px; }
button { height: 24px; width: 86px; background: #fdfdfd; border: 1px solid #d0d0d0; border-radius: 4px; font: inherit; letter-spacing: -0.35px; padding: 0; color: #000; }
button.save { width: 96px; border-color: #0067c0; margin-right: 14px; }
```
